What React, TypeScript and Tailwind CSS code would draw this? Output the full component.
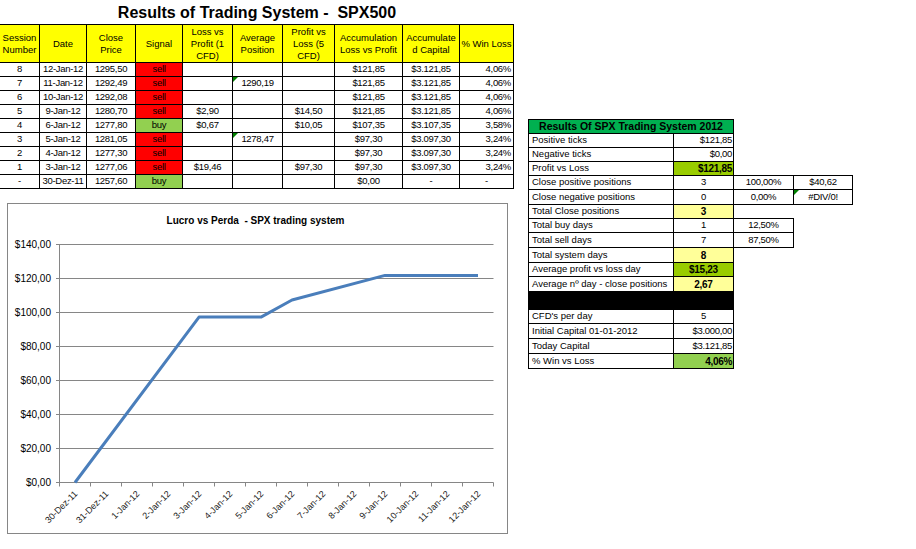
import React from 'react';

type Cell = string;

const headers: React.ReactNode[] = [
  <>Session<br />Number</>,
  <>Date</>,
  <>Close<br />Price</>,
  <>Signal</>,
  <>Loss vs<br />Profit (1<br />CFD)</>,
  <>Average<br />Position</>,
  <>Profit vs<br />Loss (5<br />CFD)</>,
  <>Accumulation<br />Loss vs Profit</>,
  <>Accumulate<br />d Capital</>,
  <>% Win Loss</>,
];

const rows: Cell[][] = [
  ['8', '12-Jan-12', '1295,50', 'sell', '', '', '', '$121,85', '$3.121,85', '4,06%'],
  ['7', '11-Jan-12', '1292,49', 'sell', '', '1290,19', '', '$121,85', '$3.121,85', '4,06%'],
  ['6', '10-Jan-12', '1292,08', 'sell', '', '', '', '$121,85', '$3.121,85', '4,06%'],
  ['5', '9-Jan-12', '1280,70', 'sell', '$2,90', '', '$14,50', '$121,85', '$3.121,85', '4,06%'],
  ['4', '6-Jan-12', '1277,80', 'buy', '$0,67', '', '$10,05', '$107,35', '$3.107,35', '3,58%'],
  ['3', '5-Jan-12', '1281,05', 'sell', '', '1278,47', '', '$97,30', '$3.097,30', '3,24%'],
  ['2', '4-Jan-12', '1277,30', 'sell', '', '', '', '$97,30', '$3.097,30', '3,24%'],
  ['1', '3-Jan-12', '1277,06', 'sell', '$19,46', '', '$97,30', '$97,30', '$3.097,30', '3,24%'],
  ['-', '30-Dez-11', '1257,60', 'buy', '', '', '', '$0,00', '-', '-'],
];

const Flag = () => (
  <span className="absolute top-0 left-0 w-0 h-0 border-t-[5px] border-r-[5px] border-t-[#008000] border-r-transparent" />
);

function MainTable() {
  return (
    <div className="border-t border-black grid grid-cols-[40px_47px_49px_47px_50px_50px_52px_68px_57px_54px]">
      {headers.map((h, i) => (
        <div
          key={i}
          className="h-[38px] bg-[#ffff00] border-r border-b border-black flex items-center justify-center text-center leading-[12px] whitespace-nowrap"
        >
          <span>{h}</span>
        </div>
      ))}
      {rows.map((r, ri) =>
        r.map((c, ci) => {
          let bg = '';
          if (ci === 3) bg = c === 'sell' ? 'bg-[#ff0000]' : 'bg-[#92d050]';
          const align = ci === 9 && c !== '-' ? 'justify-end pr-[2px]' : 'justify-center';
          const flagged = ci === 5 && c !== '';
          return (
            <div
              key={ri + '-' + ci}
              className={`relative h-[14px] border-r border-b border-black flex items-center ${align} ${bg} tracking-[-0.3px]`}
            >
              {flagged && <Flag />}
              {c}
            </div>
          );
        })
      )}
    </div>
  );
}

type SumRow = {
  label: string;
  value?: string;
  h: string;
  cls?: string;
  extra?: string;
  extraTop?: boolean;
  fourth?: string;
  flag?: boolean;
  black?: boolean;
};

const summary: SumRow[] = [
  { label: 'Positive ticks', value: '$121,85', h: 'h-[14px]', cls: 'justify-end pr-[1px]' },
  { label: 'Negative ticks', value: '$0,00', h: 'h-[14px]', cls: 'justify-end pr-[1px]' },
  { label: 'Profit vs Loss', value: '$121,85', h: 'h-[14px]', cls: 'justify-end pr-[1px] font-bold text-[10px] bg-[#99cc00]' },
  { label: 'Close positive positions', value: '3', h: 'h-[14px]', cls: 'justify-center', extra: '100,00%', extraTop: true, fourth: '$40,62' },
  { label: 'Close negative positions', value: '0', h: 'h-[15px]', cls: 'justify-center', extra: '0,00%', fourth: '#DIV/0!', flag: true },
  { label: 'Total Close positions', value: '3', h: 'h-[14px]', cls: 'justify-center font-bold text-[10px] bg-[#ffff99]' },
  { label: 'Total buy days', value: '1', h: 'h-[14px]', cls: 'justify-center', extra: '12,50%', extraTop: true },
  { label: 'Total sell days', value: '7', h: 'h-[15px]', cls: 'justify-center', extra: '87,50%' },
  { label: 'Total system days', value: '8', h: 'h-[15px]', cls: 'justify-center font-bold text-[10px] bg-[#ffff99]' },
  { label: 'Average profit vs loss day', value: '$15,23', h: 'h-[14px]', cls: 'justify-center font-bold text-[10px] bg-[#99cc00]' },
  { label: 'Average nº day - close positions', value: '2,67', h: 'h-[15px]', cls: 'justify-center font-bold text-[10px] bg-[#ffff99]' },
  { label: '', h: 'h-[18px]', black: true },
  { label: "CFD's per day", value: '5', h: 'h-[14px]', cls: 'justify-center' },
  { label: 'Initial Capital 01-01-2012', value: '$3.000,00', h: 'h-[15px]', cls: 'justify-end pr-[1px]' },
  { label: 'Today Capital', value: '$3.121,85', h: 'h-[15px]', cls: 'justify-end pr-[1px]' },
  { label: '% Win vs Loss', value: '4,06%', h: 'h-[15px]', cls: 'justify-end pr-[1px] font-bold text-[10px] bg-[#92d050]' },
];

function SummaryTable() {
  return (
    <div className="flex flex-col">
      <div className="w-[206px] h-[15px] border border-black bg-[#00b050] flex items-center justify-center font-bold text-[10.5px] whitespace-nowrap">
        Results Of SPX Trading System 2012
      </div>
      {summary.map((s, i) =>
        s.black ? (
          <div key={i} className={`w-[206px] ${s.h} bg-black border-l border-r border-b border-black`} />
        ) : (
          <div key={i} className={`flex ${s.h}`}>
            <div className="w-[146px] border-l border-r border-b border-black pl-[3px] flex items-center whitespace-nowrap">
              {s.label}
            </div>
            <div className={`w-[60px] border-r border-b border-black flex items-center tracking-[-0.3px] ${s.cls}`}>
              {s.value}
            </div>
            {s.extra && (
              <div
                className={`w-[60px] border-r border-b border-black flex items-center justify-center tracking-[-0.3px] ${
                  s.extraTop ? 'shadow-[0_-1px_0_#000]' : ''
                }`}
              >
                {s.extra}
              </div>
            )}
            {s.fourth && (
              <div
                className={`relative w-[59px] border-r border-b border-black flex items-center justify-center tracking-[-0.3px] ${
                  s.extraTop ? 'shadow-[0_-1px_0_#000]' : ''
                }`}
              >
                {s.flag && <Flag />}
                {s.fourth}
              </div>
            )}
          </div>
        )
      )}
    </div>
  );
}

const cats = [
  '30-Dez-11', '31-Dez-11', '1-Jan-12', '2-Jan-12', '3-Jan-12', '4-Jan-12', '5-Jan-12',
  '6-Jan-12', '7-Jan-12', '8-Jan-12', '9-Jan-12', '10-Jan-12', '11-Jan-12', '12-Jan-12',
];
const yLabels = ['$140,00', '$120,00', '$100,00', '$80,00', '$60,00', '$40,00', '$20,00', '$0,00'];

function Chart() {
  const axisY = 278.5;
  return (
    <div className="ml-[7px] mt-[14px] w-[501px] h-[331px] border border-[#868686] bg-white">
      <svg width="499" height="329" className="block" fontFamily="'Liberation Sans', Arial, sans-serif">
        <text x="247.5" y="20" textAnchor="middle" fontSize="10" fontWeight="bold" fill="#000" style={{ whiteSpace: 'pre' }}>
          Lucro vs Perda  - SPX trading system
        </text>
        {yLabels.map((l, k) => (
          <g key={l}>
            <line x1="48" x2="485.5" y1={40.5 + 34 * k} y2={40.5 + 34 * k} stroke="#868686" strokeWidth="1" />
            <text x="43" y={40.5 + 34 * k + 3.5} textAnchor="end" fontSize="10" fill="#000">
              {l}
            </text>
          </g>
        ))}
        <line x1="51.5" x2="51.5" y1="40.5" y2={axisY} stroke="#868686" strokeWidth="1" />
        {Array.from({ length: 15 }).map((_, k) => (
          <line key={k} x1={51.5 + 31 * k} x2={51.5 + 31 * k} y1={axisY} y2={axisY + 4} stroke="#868686" strokeWidth="1" />
        ))}
        {cats.map((c, i) => {
          const x = 67 + 31 * i + 3;
          const y = axisY + 12;
          return (
            <text key={c} x={x} y={y} textAnchor="end" fontSize="9" fill="#222" transform={`rotate(-45 ${x} ${y})`}>
              {c}
            </text>
          );
        })}
        <polyline
          points="67,278.5 191,113.1 253,113.1 284,96 377,71.4 470,71.4"
          fill="none"
          stroke="#4a7ebb"
          strokeWidth="3"
          strokeLinejoin="round"
        />
      </svg>
    </div>
  );
}

export default function App() {
  return (
    <div className="w-[916px] h-[549px] bg-white text-black font-['Liberation_Sans',Arial,sans-serif] text-[9.5px] flex overflow-hidden">
      <div className="w-[514px] flex flex-col">
        <div className="h-[24px] flex items-center justify-center text-[16px] font-bold whitespace-pre pt-[2px]">
          Results of Trading System -  SPX500
        </div>
        <MainTable />
        <Chart />
      </div>
      <div className="ml-[14px] pt-[119px]">
        <SummaryTable />
      </div>
    </div>
  );
}
